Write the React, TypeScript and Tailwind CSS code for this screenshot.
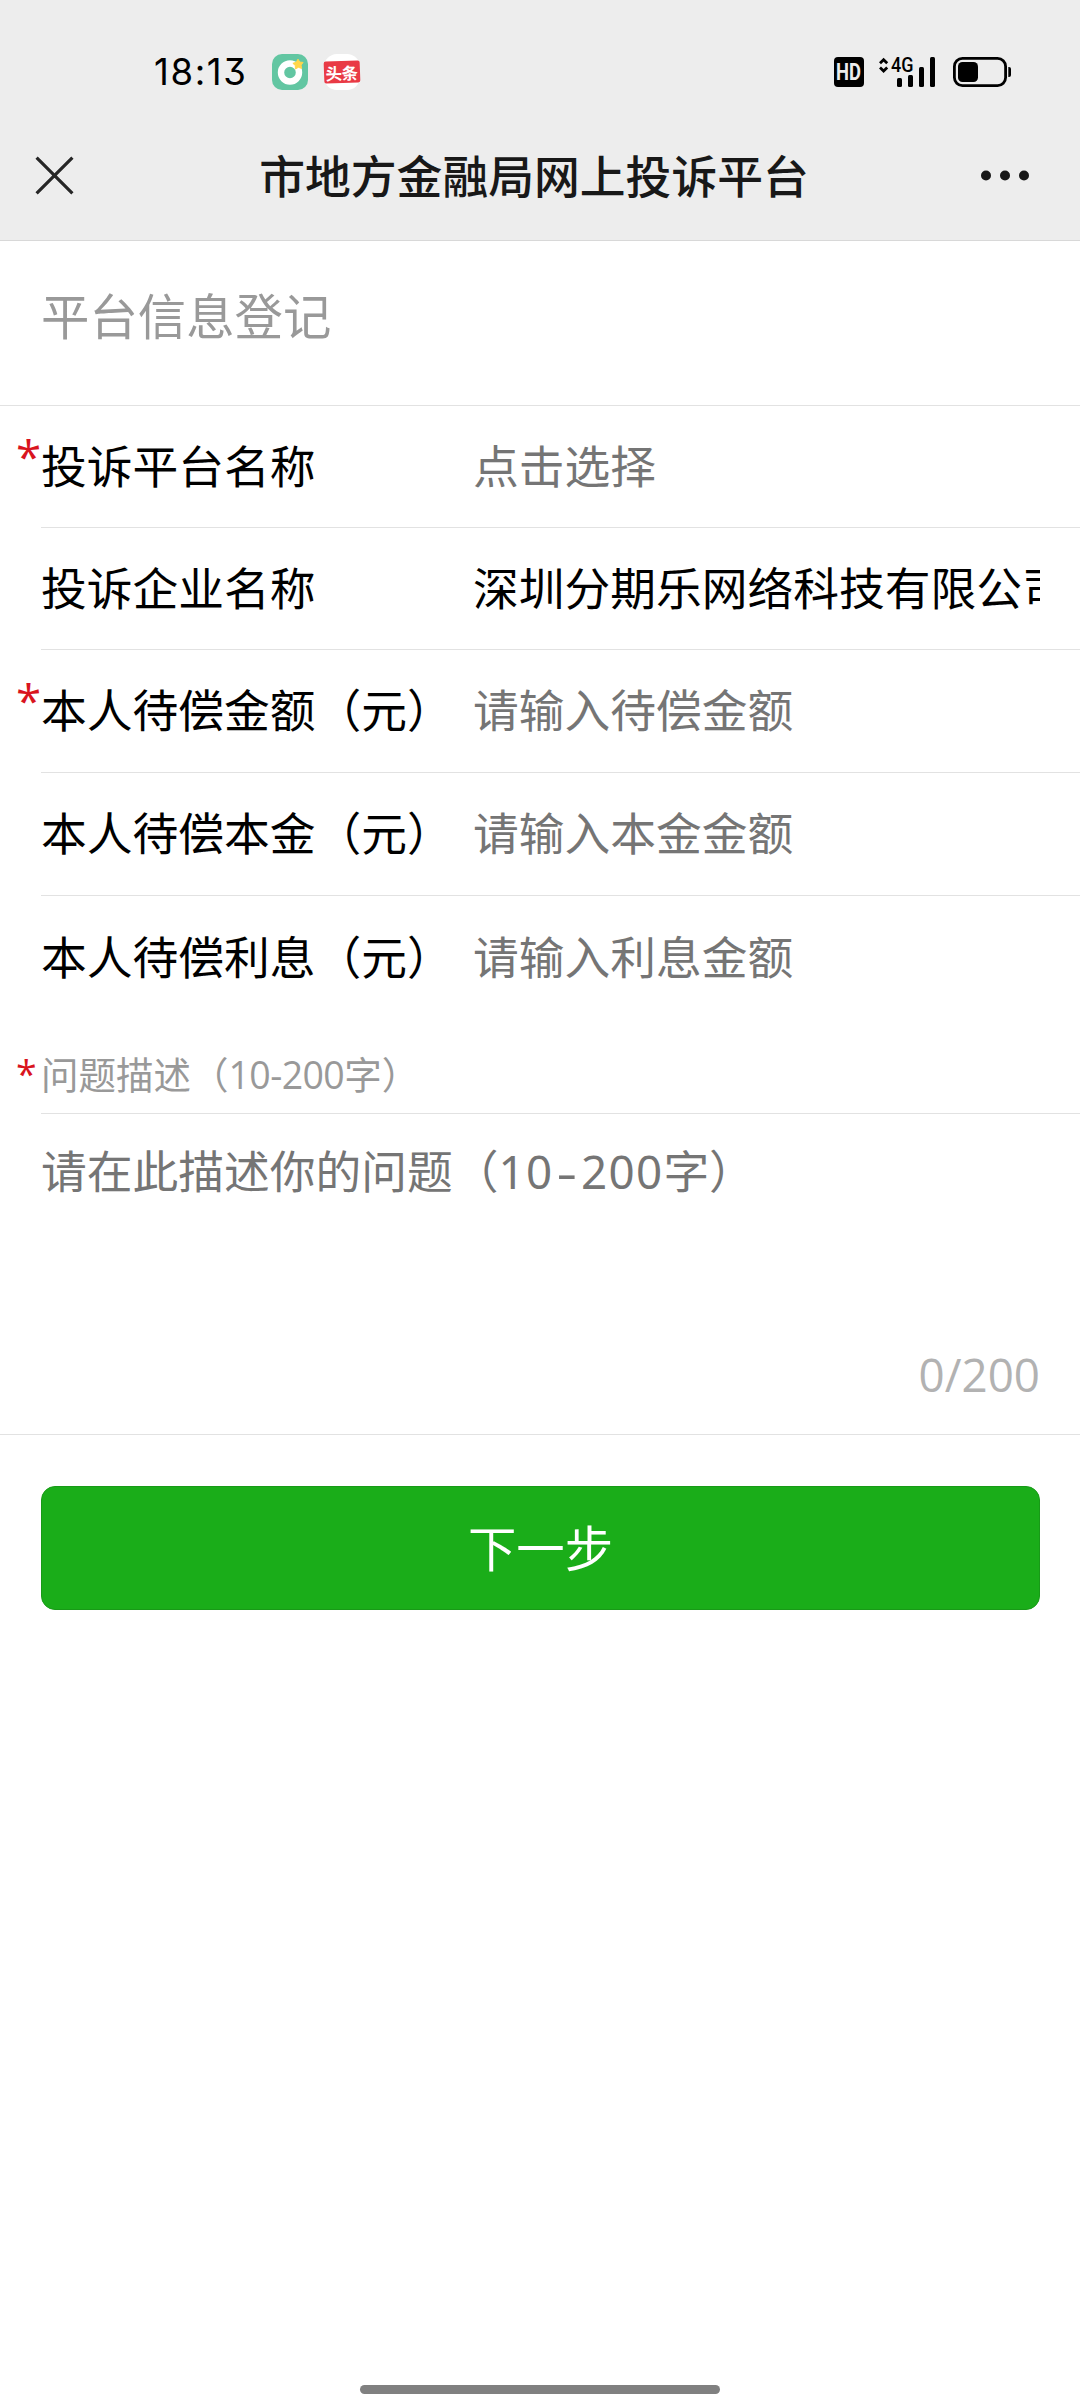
import { ReactNode } from "react";

type FieldProps = {
  label: string;
  text: string;
  required?: boolean;
  filled?: boolean;
  tall?: boolean;
  last?: boolean;
};

const StatusBar = () => {
  return (
    <div className="status-bar flex h-[144px] w-full items-center justify-between pl-[154px] pr-[69px]">
      <div className="flex items-center">
        <p className="w-[118px] whitespace-nowrap font-[Inter] text-[36.5px] leading-none tracking-[1.6px] text-black [font-feature-settings:'cv09']">
          18:13
        </p>
        <svg width="36" height="36" viewBox="0 0 36 36">
          <rect width="36" height="36" rx="10" fill="#62c6a2" />
          <circle cx="18" cy="18.5" r="9" fill="none" stroke="#fff" strokeWidth="6.4" />
          <path
            d="M26 5.2l1.8 2.9 3.3.3-2 2.7.5 3.3-3.2-1.1-3 1.7-.1-3.5-2.4-2.2 3.3-1z"
            fill="#ffd64a"
            stroke="#ffd64a"
            strokeWidth="1"
            strokeLinejoin="round"
          />
        </svg>
        <div className="ml-[16px] flex h-[36px] w-[36px] items-center justify-center rounded-[13px] bg-white">
          <div className="flex h-[22px] w-[36px] shrink-0 rotate-[-2deg] items-center justify-center rounded-[2px] bg-[#e93a45]">
            <p className="scale-110 whitespace-nowrap font-['Noto_Sans_CJK_SC',sans-serif] text-[15px] font-bold leading-none tracking-[-0.5px] text-white">
              头条
            </p>
          </div>
        </div>
      </div>
      <div className="flex items-center">
        <div className="flex h-[30px] w-[30px] items-center justify-center rounded-[4px] bg-black">
          <p className="scale-x-[0.8] font-[Roboto] text-[23px] font-bold leading-none text-[#ededed]">
            HD
          </p>
        </div>
        <svg className="ml-[14px] overflow-visible" width="58" height="30" viewBox="878 57 58 30">
          <path
            d="M880 63.3l3.6-3.5 3.6 3.5M880 67.5l3.6 3.5 3.6-3.5"
            fill="none"
            stroke="#000"
            strokeWidth="2.8"
          />
          <text
            x="891"
            y="71.8"
            fontFamily="Roboto"
            fontSize="19.5"
            fontWeight="500"
            textLength="22.5"
            lengthAdjust="spacingAndGlyphs"
          >
            4G
          </text>
          <rect x="897" y="78" width="5" height="9" rx="1.5" />
          <rect x="908" y="75" width="5" height="12" rx="1.5" />
          <rect x="919" y="67" width="5" height="20" rx="1.5" />
          <rect x="930" y="57" width="5" height="30" rx="1.5" />
        </svg>
        <svg className="ml-[17px]" width="58" height="30" viewBox="953 57 58 30">
          <rect
            x="954.4"
            y="58.4"
            width="51.2"
            height="27.2"
            rx="8"
            fill="none"
            stroke="#000"
            strokeWidth="2.8"
          />
          <rect x="958" y="62" width="20" height="20" rx="4.5" />
          <path d="M1008.3 67h.7a2 2 0 012 2v6a2 2 0 01-2 2h-.7z" />
        </svg>
      </div>
    </div>
  );
};

const NavBar = () => {
  return (
    <div className="nav-bar flex h-[97px] w-full items-start justify-between border-b border-[#d8d8d8] pl-[35px] pr-[50px]">
      <svg className="mt-[12px]" width="39" height="39" viewBox="0 0 39 39">
        <path d="M1.6 1.6l35.8 35.8M37.4 1.6L1.6 37.4" stroke="#262626" strokeWidth="3.2" />
      </svg>
      <h1 className="ml-[14px] text-[45.8px] font-medium leading-[60px] text-[#181818]">
        市地方金融局网上投诉平台
      </h1>
      <svg className="mt-[26px]" width="50" height="12" viewBox="0 0 50 12">
        <circle cx="6" cy="5.5" r="5" fill="#181818" />
        <circle cx="25" cy="5.5" r="5" fill="#181818" />
        <circle cx="44" cy="5.5" r="5" fill="#181818" />
      </svg>
    </div>
  );
};

const Required = ({ small, children }: { small?: boolean; children: ReactNode }) => {
  return (
    <div className="relative">
      <span
        className={`absolute left-[-25px] font-['Open_Sans'] text-[#d9141e] ${
          small ? "top-[1px]" : "top-[-8px]"
        }`}
      >
        *
      </span>
      {children}
    </div>
  );
};

const Field = ({ label, text, required, filled, tall, last }: FieldProps) => {
  return (
    <div
      className={`ml-[41px] flex items-center pr-[40px] text-[45.75px] leading-[64px] ${
        tall ? "h-[123px] pb-[7px]" : "h-[122px] pb-[5px]"
      } ${last ? "" : "border-b border-[#e2e2e2]"}`}
    >
      <div className="w-[432px] shrink-0 whitespace-nowrap text-black">
        {required ? <Required>{label}</Required> : label}
      </div>
      <div
        className={`flex-1 overflow-hidden whitespace-nowrap ${
          filled ? "text-black" : "text-[#757575]"
        }`}
      >
        {text}
      </div>
    </div>
  );
};

const App = () => {
  return (
    <div
      lang="zh-CN"
      className="flex h-[2400px] w-[1080px] flex-col overflow-hidden bg-white font-['Noto_Sans_CJK_SC',sans-serif]"
    >
      <header className="h-[241px] shrink-0 bg-[#ededed]">
        <StatusBar />
        <NavBar />
      </header>

      <h2 className="h-[165px] border-b border-[#e2e2e2] pl-[41px] pt-[40px] text-[48.4px] leading-[66px] text-[#999999]">
        平台信息登记
      </h2>

      <Field label="投诉平台名称" text="点击选择" required />
      <Field label="投诉企业名称" text="深圳分期乐网络科技有限公司" filled />
      <Field label="本人待偿金额（元）" text="请输入待偿金额" required tall />
      <Field label="本人待偿本金（元）" text="请输入本金金额" tall />
      <Field label="本人待偿利息（元）" text="请输入利息金额" last />

      <div className="ml-[41px] flex h-[96px] items-end border-b border-[#e2e2e2] pb-[13px] text-[37.5px] leading-[50px] text-[#999999]">
        <Required small>
          问题描述（
          <span className="font-['Open_Sans'] tracking-[-0.6px]">10-200</span>
          字）
        </Required>
      </div>

      <div className="flex h-[321px] flex-col justify-between border-b border-[#e2e2e2] pb-[28px] pl-[41px] pr-[40px] pt-[23px] text-[45.75px] leading-[64px]">
        <p className="text-[#757575]">
          请在此描述你的问题（
          <span className="font-['Noto_Sans'] tracking-[1.3px]">10</span>
          <span className="inline-block w-[27.5px] scale-x-140 text-center font-['Noto_Sans']">-</span>
          <span className="font-['Noto_Sans'] tracking-[1.3px]">200</span>
          字）
        </p>
        <p className="text-right font-['Open_Sans'] text-[#b2b2b2]">0/200</p>
      </div>

      <div className="pl-[41px] pr-[40px] pt-[51px]">
        <div className="flex h-[124px] items-center justify-center rounded-[14px] border border-[#189a17] bg-[#1aad19] pb-[4px] text-[48.4px] leading-none text-white">
          下一步
        </div>
      </div>

      <div className="mx-auto mb-[6px] mt-auto h-[9px] w-[360px] rounded-full bg-[#808080]" />
    </div>
  );
};

export default App;
